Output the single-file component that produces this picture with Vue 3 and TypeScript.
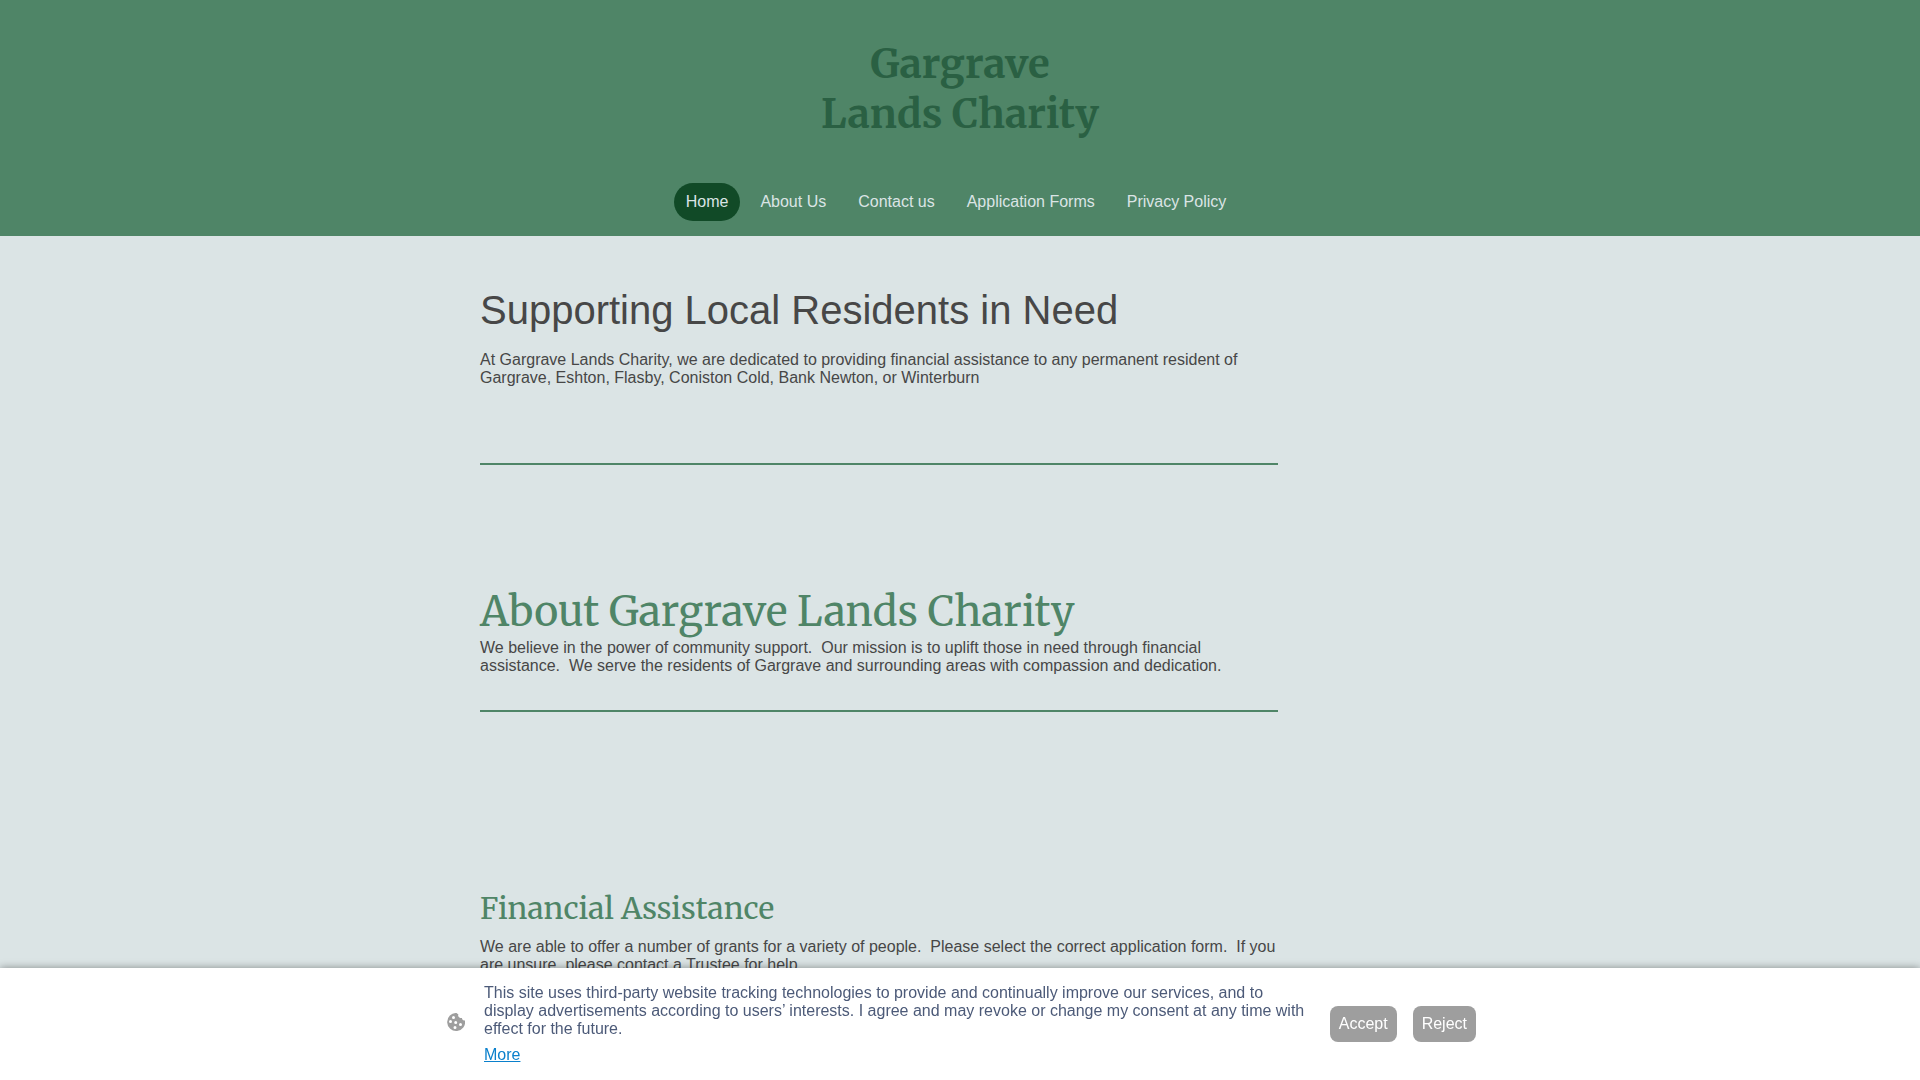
<script setup lang="ts">
import { ref } from 'vue'

interface NavItem {
  label: string
  href: string
}

const navItems: NavItem[] = [
  { label: 'Home', href: '#home' },
  { label: 'About Us', href: '#about-us' },
  { label: 'Contact us', href: '#contact-us' },
  { label: 'Application Forms', href: '#application-forms' },
  { label: 'Privacy Policy', href: '#privacy-policy' },
]

const current = ref('Home')
const consentOpen = ref(true)
</script>

<template>
  <div class="page">
    <header class="site-header">
      <p class="site-title">Gargrave<br />Lands Charity</p>
      <nav class="site-nav" aria-label="Main">
        <a
          v-for="item in navItems"
          :key="item.label"
          :href="item.href"
          class="nav-link"
          :class="{ active: item.label === current }"
          @click="current = item.label"
        >{{ item.label }}</a>
      </nav>
    </header>

    <main class="content">
      <section class="intro">
        <h1 class="intro-title">Supporting Local Residents in Need</h1>
        <p>At Gargrave Lands Charity, we are dedicated to providing financial assistance to any permanent resident of Gargrave, Eshton, Flasby, Coniston Cold, Bank Newton, or Winterburn</p>
      </section>
      <hr class="rule" />
      <section class="about">
        <h2 class="about-title">About Gargrave Lands Charity</h2>
        <p>We believe in the power of community support.&nbsp; Our mission is to uplift those in need through financial assistance.&nbsp; We serve the residents of Gargrave and surrounding areas with compassion and dedication.</p>
      </section>
      <hr class="rule" />
      <section class="assistance">
        <h3 class="assistance-title">Financial Assistance</h3>
        <p>We are able to offer a number of grants for a variety of people.&nbsp; Please select the correct application form.&nbsp; If you are unsure, please contact a Trustee for help.</p>
      </section>
    </main>

    <aside v-if="consentOpen" class="consent" aria-label="Cookie consent">
      <div class="consent-inner">
        <svg class="cookie" viewBox="0 0 18 18" aria-hidden="true">
          <path
            fill="#9e9e9e"
            fill-rule="evenodd"
            d="M9.600 0a9 9 0 1 0 8.400 7.400c-1 .3-2 0-2.600-.8-.3-.5-.4-1-.4-1.600-1.300.3-2.600-.2-3.400-1.200-.6-.8-.6-1.800-.2-2.600C10.600 1 10 .7 9.600 0zM6.500 3a1.500 1.500 0 1 1 0 3 1.500 1.500 0 0 1 0-3zM3.500 7a1.500 1.500 0 1 1 0 3 1.500 1.500 0 0 1 0-3zM8.700 8a1.500 1.500 0 1 1 0 3 1.500 1.500 0 0 1 0-3zM13.500 10a1.500 1.500 0 1 1 0 3 1.500 1.500 0 0 1 0-3zM8 13a1.500 1.500 0 1 1 0 3 1.500 1.500 0 0 1 0-3z"
          />
        </svg>
        <div class="consent-text">
          <p>This site uses third-party website tracking technologies to provide and continually improve our services, and to display advertisements according to users’ interests. I agree and may revoke or change my consent at any time with effect for the future.</p>
          <a class="more" href="#more">More</a>
        </div>
        <div class="consent-actions">
          <button type="button" @click="consentOpen = false">Accept</button>
          <button type="button" @click="consentOpen = false">Reject</button>
        </div>
      </div>
    </aside>
  </div>
</template>

<style>
body {
  margin: 0;
  background: #dbe4e5;
}
</style>

<style scoped>
.page {
  min-height: 100vh;
  font-family: "Liberation Sans", Arial, sans-serif;
  font-size: 16px;
  line-height: 18px;
  color: #474747;
}

p,
h1,
h2,
h3 {
  margin: 0;
  font-weight: 400;
}

.site-header {
  display: flex;
  flex-direction: column;
  align-items: center;
  gap: 44px;
  padding: 39px 16px 15px;
  background: #4f8567;
}

.site-title,
.about-title,
.assistance-title {
  font-family: Merriweather, "Noto Serif", "Liberation Serif", serif;
}

.site-title {
  font-size: 40px;
  line-height: 50px;
  font-weight: 700;
  text-align: center;
  color: #2a6043;
}

.site-nav {
  display: flex;
  flex-wrap: wrap;
  justify-content: center;
}

.nav-link {
  margin-right: 8px;
  padding: 10px 12px;
  border-radius: 19px;
  color: #dbe4e5;
  text-decoration: none;
}

.nav-link.active {
  background: #114a27;
}

.content {
  max-width: 960px;
  margin: 0 auto;
}

.content section,
.rule {
  max-width: 798px;
}

.rule {
  height: 2px;
  margin: 0;
  border: 0;
  background: #4f8567;
}

.intro {
  padding: 50px 0 76px;
}

.intro-title {
  margin-bottom: 17px;
  font-size: 40px;
  line-height: 48px;
}

.about {
  padding: 122px 0 35px;
}

.about-title {
  font-size: 41px;
  line-height: 50px;
  margin-bottom: 2px;
  color: #4f8567;
}

.assistance {
  padding: 177px 0 0;
}

.assistance-title {
  margin-bottom: 11px;
  font-size: 30px;
  line-height: 38px;
  color: #4f8567;
}

.consent {
  position: fixed;
  right: 0;
  bottom: 0;
  left: 0;
  background: #fff;
  box-shadow: 0 0 8px rgba(0, 0, 0, 0.4);
  color: #4c5a78;
}

.consent-inner {
  display: flex;
  align-items: center;
  max-width: 1029px;
  margin: 0 auto;
  padding: 16px 16px 16px 19px;
}

.cookie {
  flex: none;
  width: 18px;
  height: 18px;
  margin: 0 19px 4px 0;
}

.consent-text {
  flex: 1;
  max-width: 830px;
}

.more {
  display: inline-block;
  margin-top: 8px;
  color: #0a80cc;
}

.consent-actions {
  display: flex;
  gap: 16px;
  margin-left: 16px;
}

.consent-actions button {
  padding: 9px;
  border: 0;
  border-radius: 8px;
  background: #9e9e9e;
  color: #fff;
  font: inherit;
  line-height: 18px;
  cursor: pointer;
}
</style>
